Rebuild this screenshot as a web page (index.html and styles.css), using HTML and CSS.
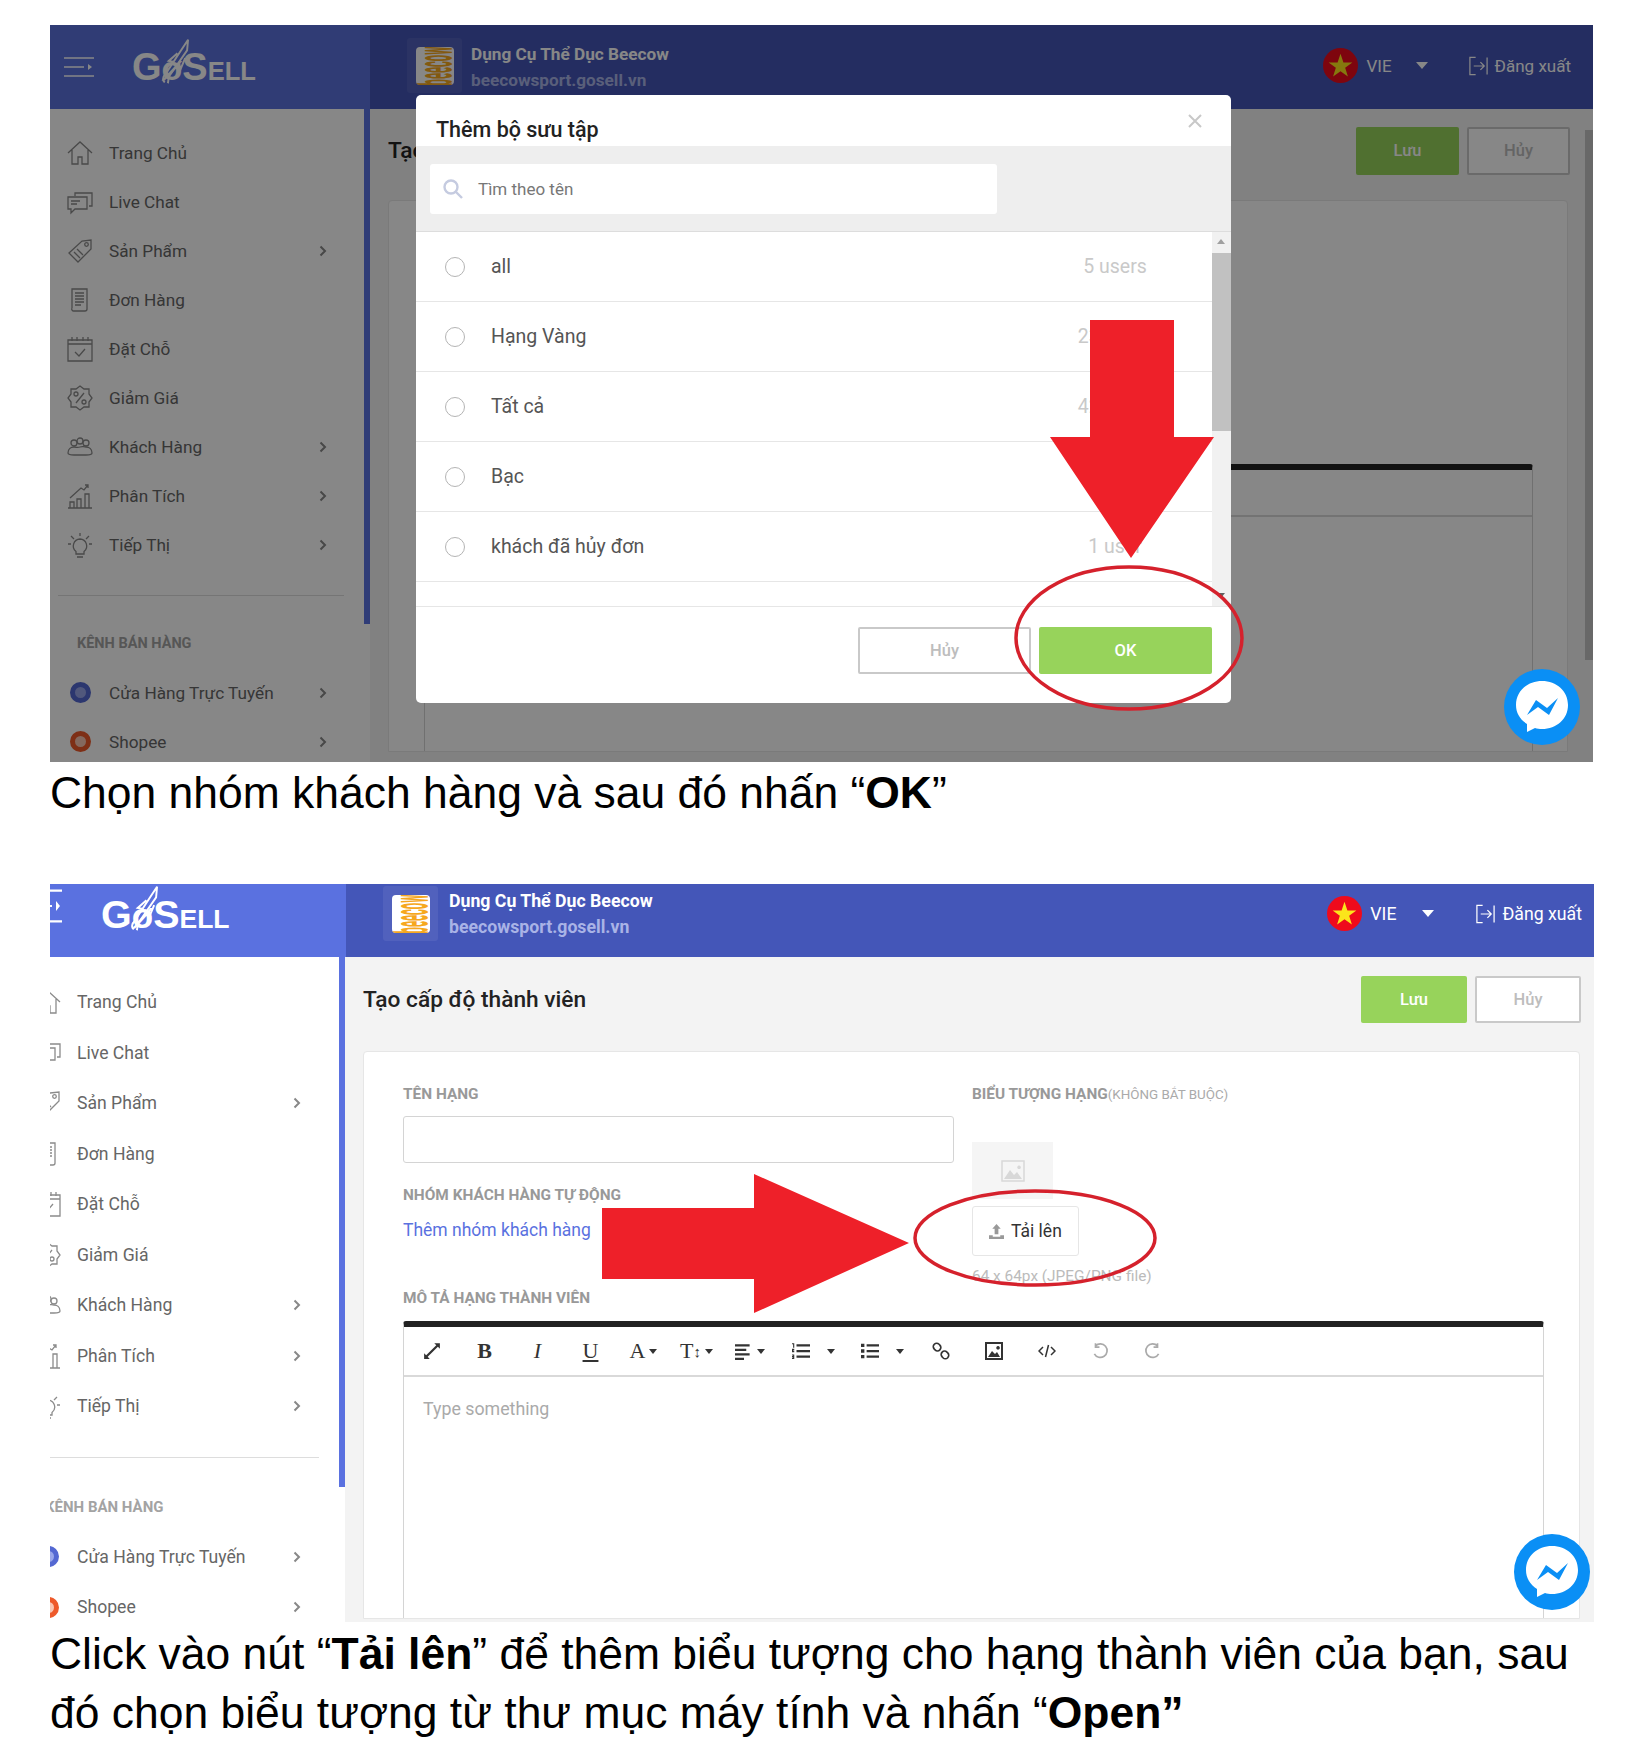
FILE: index.html
```html
<!DOCTYPE html>
<html lang="vi">
<head>
    <meta charset="UTF-8">
    <meta name="viewport" content="width=device-width, initial-scale=1.0">
    <title>Tạo cấp độ thành viên</title>
    <link rel="stylesheet" href="styles.css">
</head>
<body>
    <!-- shared sidebar icons -->
    <svg class="defs" width="0" height="0">
        <symbol id="i-home" viewBox="0 0 26 26"><path d="M1 13 13 2l12 11M5 10v14h6v-7h4v7h6V10"/></symbol>
        <symbol id="i-chat" viewBox="0 0 26 26"><path d="M8 7V4h17v13h-3M1 8h19v12H8l-4 4v-4H1zM4 12h9M4 15h6"/></symbol>
        <symbol id="i-tag" viewBox="0 0 26 26"><path d="M2 15 15 3l9-1v9L11 24zM7 14l6 6M10 11l6 6"/><circle cx="19.5" cy="6.5" r="1.8"/></symbol>
        <symbol id="i-doc" viewBox="0 0 26 26"><path d="M5 21V2h15v20a2 2 0 0 1-2 2H7a2 2 0 0 1-2-3M8 6h9M8 9h9M8 12h9M8 15h9M8 18h6"/></symbol>
        <symbol id="i-cal" viewBox="0 0 26 26"><path d="M1 4h24v21H1zM1 8h24M5 1v4M10 1v4M16 1v4M21 1v4M8 16l4 4 6-7"/></symbol>
        <symbol id="i-pct" viewBox="0 0 26 26"><path d="M13 1l4 3h5v5l3 4-3 4v5h-5l-4 3-4-3H4v-5l-3-4 3-4V4h5zM9 18l8-10"/><circle cx="9" cy="9" r="2"/><circle cx="17" cy="17" r="2"/></symbol>
        <symbol id="i-people" viewBox="0 0 26 26"><circle cx="7" cy="9" r="3"/><circle cx="13" cy="7" r="3"/><circle cx="19" cy="9" r="3"/><path d="M1 19c0-4 3-6 6-6s3 1 6 0 3 0 6 0 6 2 6 6c0 1-2 2-6 2H7c-4 0-6-1-6-2z"/></symbol>
        <symbol id="i-chart" viewBox="0 0 26 26"><path d="M1 25h24M3 25v-6h4v6M10 25v-9h4v9M18 25V11h4v14M3 15 14 5l3 2 4-5M18 2h3v3"/></symbol>
        <symbol id="i-bulb" viewBox="0 0 26 26"><path d="M13 7a7 7 0 0 0-4 12.5V22h8v-2.500A7 7 0 0 0 13 7zM10 25h6M13 1v3M4 4l3 3M22 4l-3 3M1 12h3M22 12h3"/></symbol>
        <symbol id="i-next" viewBox="0 0 10 12"><path d="M2.500 1.500 7 6l-4.500 4.500"/></symbol>
        <symbol id="i-search" viewBox="0 0 20 20"><circle cx="8" cy="8" r="6.500"/><path d="m13 13 6 6"/></symbol>
        <symbol id="i-logout" viewBox="0 0 22 22"><path d="M8 2H2v18h6M6 11h11M13 7l4 4-4 4M20 2v18"/></symbol>
        <symbol id="i-rocket" viewBox="0 0 30 50"><path d="M4 47c-3-2-2-6 1-9L22 12l6-9-1 11L9 40c-2 3-1 6-2 8M14 26l-6-1 9-8M19 28l1 6 5-12"/></symbol>
        <symbol id="i-messenger" viewBox="0 0 76 76"><circle class="m-bg" cx="38" cy="38" r="38"/><path class="m-bubble" d="M38 12c14.500 0 26 10 26 24S52.500 60 38 60c-2.500 0-5-.3-7-1l-8 4v-8c-7-4.500-11-11-11-19 0-14 11.500-24 26-24z"/><path class="m-bg" d="M23 46 32 31 43 39 54 29 45 46 34 38z"/></symbol>
        <symbol id="i-flag" viewBox="0 0 36 36"><circle class="flag-red" cx="18" cy="18" r="18"/><path class="flag-star" d="m18 6 3 8.800h9.200l-7.400 5.600 2.800 9-7.600-5.500-7.600 5.500 2.800-9-7.400-5.600H15z"/></symbol>
        <symbol id="i-burger" viewBox="0 0 30 20" preserveAspectRatio="none"><path d="M0 1h30M0 10h20M0 19h30"/><path class="solid" d="M24 7l4 3-4 3z"/></symbol>
    </svg>

    <div class="shot shot-modal">
        <header class="topbar">
            <div class="brand">
                <svg class="burger"><use href="#i-burger"/></svg>
                <span class="logo">G<span class="logo-o">ø</span>S<span class="logo-rest">ELL</span><svg class="rocket"><use href="#i-rocket"/></svg></span>
            </div>
            <div class="store">
                <div class="store-box"><div class="store-logo"><span>beecow</span></div></div>
                <div>
                    <div class="store-name">Dụng Cụ Thể Dục Beecow</div>
                    <div class="store-url">beecowsport.gosell.vn</div>
                </div>
            </div>
            <div class="top-actions">
                <svg class="flag"><use href="#i-flag"/></svg>
                <span>VIE</span>
                <span class="caret"></span>
                <svg class="logout"><use href="#i-logout"/></svg>
                <span>Đăng xuất</span>
            </div>
        </header>
        <div class="layout">
            <aside class="sidebar">
                <nav class="nav">
                    <a class="nav-item"><svg class="nav-icon"><use href="#i-home"/></svg>Trang Chủ</a>
                    <a class="nav-item"><svg class="nav-icon"><use href="#i-chat"/></svg>Live Chat</a>
                    <a class="nav-item"><svg class="nav-icon"><use href="#i-tag"/></svg>Sản Phẩm<svg class="chevron"><use href="#i-next"/></svg></a>
                    <a class="nav-item"><svg class="nav-icon"><use href="#i-doc"/></svg>Đơn Hàng</a>
                    <a class="nav-item"><svg class="nav-icon"><use href="#i-cal"/></svg>Đặt Chỗ</a>
                    <a class="nav-item"><svg class="nav-icon"><use href="#i-pct"/></svg>Giảm Giá</a>
                    <a class="nav-item"><svg class="nav-icon"><use href="#i-people"/></svg>Khách Hàng<svg class="chevron"><use href="#i-next"/></svg></a>
                    <a class="nav-item"><svg class="nav-icon"><use href="#i-chart"/></svg>Phân Tích<svg class="chevron"><use href="#i-next"/></svg></a>
                    <a class="nav-item"><svg class="nav-icon"><use href="#i-bulb"/></svg>Tiếp Thị<svg class="chevron"><use href="#i-next"/></svg></a>
                    <div class="nav-divider"></div>
                    <div class="nav-label">KÊNH BÁN HÀNG</div>
                    <a class="nav-item"><span class="channel channel-store"><span></span></span>Cửa Hàng Trực Tuyến<svg class="chevron"><use href="#i-next"/></svg></a>
                    <a class="nav-item"><span class="channel channel-shopee"><span></span></span>Shopee<svg class="chevron"><use href="#i-next"/></svg></a>
                </nav>
                <div class="side-rail"><div class="side-thumb"></div></div>
            </aside>
            <main class="main">
                <div class="main-col">
                    <div class="page-head">
                        <h1 class="page-title">Tạo cấp độ thành viên</h1>
                        <div class="page-btns">
                            <button class="btn btn-green">Lưu</button>
                            <button class="btn btn-line">Hủy</button>
                        </div>
                    </div>
                    <div class="card card-behind">
                        <div class="editor"><div class="toolbar"></div></div>
                    </div>
                </div>
                <div class="main-rail"></div>
            </main>
        </div>

        <div class="overlay"></div>
        <div class="modal">
            <div class="modal-head">
                <h2 class="modal-title">Thêm bộ sưu tập</h2>
                <svg class="modal-close" viewBox="0 0 14 14"><path d="m1 1 12 12M13 1 1 13"/></svg>
            </div>
            <div class="modal-search">
                <div class="search-box">
                    <svg class="search-icon"><use href="#i-search"/></svg>
                    <span>Tìm theo tên</span>
                </div>
            </div>
            <div class="modal-list">
                <div class="rows">
                    <div class="row"><span class="radio"></span><span class="row-name">all</span><span class="row-count">5 users</span></div>
                    <div class="row"><span class="radio"></span><span class="row-name">Hạng Vàng</span><span class="row-count">23 users</span></div>
                    <div class="row"><span class="radio"></span><span class="row-name">Tất cả</span><span class="row-count">42 users</span></div>
                    <div class="row"><span class="radio"></span><span class="row-name">Bạc</span><span class="row-count">2 users</span></div>
                    <div class="row"><span class="radio"></span><span class="row-name">khách đã hủy đơn</span><span class="row-count">1 user</span></div>
                </div>
                <div class="list-scroll">
                    <span class="scroll-up"></span>
                    <div class="scroll-thumb"></div>
                    <span class="scroll-down"></span>
                </div>
            </div>
            <div class="modal-foot">
                <button class="btn btn-line">Hủy</button>
                <button class="btn btn-green">OK</button>
            </div>
        </div>

        <svg class="messenger"><use href="#i-messenger"/></svg>
        <svg class="marks" viewBox="0 0 1543 737">
            <path class="mark-arrow" d="M1040 295h84v117h40l-83 121-81-121h40z"/>
            <ellipse class="mark-ring" cx="1079" cy="613" rx="113" ry="71"/>
        </svg>
    </div>
    <p class="caption">Chọn nhóm khách hàng và sau đó nhấn “<b>OK</b>”</p>

    <div class="shot shot-form">
        <header class="topbar">
            <div class="brand">
                <svg class="burger"><use href="#i-burger"/></svg>
                <span class="logo">G<span class="logo-o">ø</span>S<span class="logo-rest">ELL</span><svg class="rocket"><use href="#i-rocket"/></svg></span>
            </div>
            <div class="store">
                <div class="store-box"><div class="store-logo"><span>beecow</span></div></div>
                <div>
                    <div class="store-name">Dụng Cụ Thể Dục Beecow</div>
                    <div class="store-url">beecowsport.gosell.vn</div>
                </div>
            </div>
            <div class="top-actions">
                <svg class="flag"><use href="#i-flag"/></svg>
                <span>VIE</span>
                <span class="caret"></span>
                <svg class="logout"><use href="#i-logout"/></svg>
                <span>Đăng xuất</span>
            </div>
        </header>
        <div class="layout">
            <aside class="sidebar">
                <nav class="nav">
                    <a class="nav-item"><svg class="nav-icon"><use href="#i-home"/></svg>Trang Chủ</a>
                    <a class="nav-item"><svg class="nav-icon"><use href="#i-chat"/></svg>Live Chat</a>
                    <a class="nav-item"><svg class="nav-icon"><use href="#i-tag"/></svg>Sản Phẩm<svg class="chevron"><use href="#i-next"/></svg></a>
                    <a class="nav-item"><svg class="nav-icon"><use href="#i-doc"/></svg>Đơn Hàng</a>
                    <a class="nav-item"><svg class="nav-icon"><use href="#i-cal"/></svg>Đặt Chỗ</a>
                    <a class="nav-item"><svg class="nav-icon"><use href="#i-pct"/></svg>Giảm Giá</a>
                    <a class="nav-item"><svg class="nav-icon"><use href="#i-people"/></svg>Khách Hàng<svg class="chevron"><use href="#i-next"/></svg></a>
                    <a class="nav-item"><svg class="nav-icon"><use href="#i-chart"/></svg>Phân Tích<svg class="chevron"><use href="#i-next"/></svg></a>
                    <a class="nav-item"><svg class="nav-icon"><use href="#i-bulb"/></svg>Tiếp Thị<svg class="chevron"><use href="#i-next"/></svg></a>
                    <div class="nav-divider"></div>
                    <div class="nav-label">KÊNH BÁN HÀNG</div>
                    <a class="nav-item"><span class="channel channel-store"><span></span></span>Cửa Hàng Trực Tuyến<svg class="chevron"><use href="#i-next"/></svg></a>
                    <a class="nav-item"><span class="channel channel-shopee"><span></span></span>Shopee<svg class="chevron"><use href="#i-next"/></svg></a>
                </nav>
                <div class="side-rail"><div class="side-thumb"></div></div>
            </aside>
            <main class="main">
                <div class="main-col">
                    <div class="page-head">
                        <h1 class="page-title">Tạo cấp độ thành viên</h1>
                        <div class="page-btns">
                            <button class="btn btn-green">Lưu</button>
                            <button class="btn btn-line">Hủy</button>
                        </div>
                    </div>
                    <div class="card">
                        <div class="form-grid">
                            <div>
                                <label class="field-label">TÊN HẠNG</label>
                                <div class="text-input"></div>
                                <label class="field-label group-label">NHÓM KHÁCH HÀNG TỰ ĐỘNG</label>
                                <a class="add-link">Thêm nhóm khách hàng</a>
                            </div>
                            <div>
                                <label class="field-label">BIỂU TƯỢNG HẠNG<span class="optional">(KHÔNG BẮT BUỘC)</span></label>
                                <div class="thumb-box">
                                    <svg class="thumb-icon" viewBox="0 0 24 24"><path class="thumb-frame" d="M1 2h22v20H1z"/><path class="solid" d="M3 20l6-9 4 5 3-3 5 7zM18 6.500a1.800 1.800 0 1 0 .1 0z"/></svg>
                                </div>
                                <button class="upload-btn">
                                    <svg class="upload-icon" viewBox="0 0 16 16"><path class="solid" d="M8 0l4.500 5H10v6H6V5H3.500zM0 12h4v1.500h8V12h4v4H0z"/></svg>
                                    Tải lên
                                </button>
                                <div class="upload-hint">64 x 64px (JPEG/PNG file)</div>
                            </div>
                        </div>
                        <label class="field-label desc-label">MÔ TẢ HẠNG THÀNH VIÊN</label>
                        <div class="editor">
                            <div class="toolbar">
                                <span class="tool"><svg class="tool-icon" viewBox="0 0 16 16"><path class="solid" d="M1 15v-5l1.800 1.800 9-9L10 1h5v5l-1.800-1.800-9 9L6 15z"/></svg></span>
                                <span class="tool tool-serif"><b>B</b></span>
                                <span class="tool tool-serif"><i>I</i></span>
                                <span class="tool tool-serif"><u>U</u></span>
                                <span class="tool tool-serif">A<span class="tool-caret"></span></span>
                                <span class="tool tool-serif">T<small>↕</small><span class="tool-caret"></span></span>
                                <span class="tool"><svg class="tool-icon" viewBox="0 0 16 16"><path class="solid" d="M0 2h13v2H0zM0 6h10v2H0zM0 10h13v2H0zM0 14h8v2H0z"/></svg><span class="tool-caret"></span></span>
                                <span class="tool tool-ol"><svg class="tool-icon" viewBox="0 0 16 16"><path class="solid" d="M4 2h12v2H4zM4 7h12v2H4zM4 12h12v2H4zM0 1h2v4H1V2H0zM0 6h2v1.500H1V8h1v1H0zM0 11h2v4H0v-1h1v-.5H0v-1h1V12H0z"/></svg><span class="tool-caret"></span></span>
                                <span class="tool tool-ul"><svg class="tool-icon" viewBox="0 0 16 16"><path class="solid" d="M5 2h11v2H5zM5 7h11v2H5zM5 12h11v2H5zM0 1.500h3v3H0zM0 6.500h3v3H0zM0 11.500h3v3H0z"/></svg><span class="tool-caret"></span></span>
                                <span class="tool"><svg class="tool-icon tool-line" viewBox="0 0 16 16"><rect x="1" y="1.500" width="7" height="6" rx="3" transform="rotate(45 4.500 4.500)"/><rect x="8" y="8.500" width="7" height="6" rx="3" transform="rotate(45 11.500 11.500)"/></svg></span>
                                <span class="tool"><svg class="tool-icon" viewBox="0 0 18 18"><path class="tool-frame" d="M1 1h16v16H1z"/><path class="solid" d="M3 15l4-6 3 3 2-2 3 5zM13 4a1.800 1.800 0 1 0 .1 0z"/></svg></span>
                                <span class="tool"><svg class="tool-icon tool-line" viewBox="0 0 18 16"><path d="M5 4 1 8l4 4M13 4l4 4-4 4M10.500 2l-3 12"/></svg></span>
                                <span class="tool tool-off"><svg class="tool-icon tool-line" viewBox="0 0 16 16"><path d="M4 3.500a6 6 0 1 1-1 7M4 1v3.500h3.500"/></svg></span>
                                <span class="tool tool-off"><svg class="tool-icon tool-line" viewBox="0 0 16 16"><path d="M12 3.500a6 6 0 1 0 1 7M12 1v3.500H8.500"/></svg></span>
                            </div>
                            <div class="editor-body">Type something</div>
                        </div>
                    </div>
                </div>
            </main>
        </div>

        <svg class="messenger"><use href="#i-messenger"/></svg>
        <svg class="marks" viewBox="0 0 1544 738">
            <path class="mark-arrow" d="M552 324h152v-34l155 69-155 70v-34H552z"/>
            <ellipse class="mark-ring" cx="985" cy="354" rx="120" ry="47"/>
        </svg>
    </div>
    <p class="caption caption-long">Click vào nút “<b>Tải lên</b>” để thêm biểu tượng cho hạng thành viên của bạn, sau đó chọn biểu tượng từ thư mục máy tính và nhấn “<b>Open”</b></p>
</body>
</html>
```

FILE: styles.css
```css
* {
    box-sizing: border-box;
}

html, body {
    height: 1764px;
    overflow: hidden;
}

body {
    margin: 0;
    padding: 25px 0 0 50px;
    background: #fff;
    font-family: Roboto, "Liberation Sans", sans-serif;
    color: #333;
    stroke-width: 1.3;
}

.defs {
    display: block;
    height: 0;
}

symbol path, symbol circle, symbol rect {
    fill: none;
    stroke: currentColor;
}

.solid {
    fill: currentColor !important;
    stroke: none !important;
}

.flag-red {
    fill: #ef0a1c !important;
    stroke: none !important;
}

.flag-star {
    fill: #fbe51b !important;
    stroke: none !important;
}

/* one screenshot */
.shot {
    position: relative;
    display: flex;
    flex-direction: column;
    overflow: hidden;
    width: 1543px;
    background: #f3f3f3;
}

.shot-modal {
    height: 737px;
}

.shot-form {
    height: 738px;
    width: 1544px;
}

/* header */
.topbar {
    display: flex;
    align-items: center;
    flex: none;
    color: #fff;
    background: #4456b8;
}

.shot-modal .topbar {
    height: 84px;
    padding: 0 22px 3px 0;
}

.shot-form .topbar {
    height: 73px;
    padding: 0 12px 14px 0;
}

.brand {
    display: flex;
    align-items: center;
    align-self: stretch;
    background: #5a71e0;
}

.shot-modal .brand {
    width: 320px;
    margin-bottom: -3px;
    padding-left: 14px;
    background: #5b72dd;
}

.shot-form .brand {
    width: 296px;
    margin-bottom: -14px;
    padding-bottom: 12px;
    overflow: hidden;
}

.burger {
    flex: none;
    width: 30px;
    height: 20px;
    margin-right: 38px;
    color: #fff;
}

.shot-form .burger {
    width: 30px;
    height: 34px;
    margin: -17px 39px 0 -18px;
}

.logo {
    position: relative;
    font-family: "Liberation Sans", sans-serif;
    font-weight: 700;
    font-size: 38px;
    line-height: 1;
    white-space: nowrap;
}

.logo-rest {
    font-size: 25.5px;
}

.logo-o {
    font-size: 34px;
}

.shot-form .logo {
    font-size: 39.5px;
}

.shot-form .logo-rest {
    font-size: 26.5px;
}

.shot-form .logo-o {
    font-size: 35px;
}

.rocket {
    position: absolute;
    left: 29px;
    top: -12px;
    width: 29px;
    height: 50px;
    color: #fff;
    stroke-width: 2;
}

.store {
    display: flex;
    align-items: center;
    gap: 9px;
    margin-left: 37px;
    font-weight: 700;
}

.shot-form .store {
    gap: 11px;
}

.store-box {
    display: flex;
    align-items: center;
    justify-content: center;
    width: 55px;
    height: 55px;
    background: #5161bd;
    border-radius: 3px;
}

.store-logo {
    display: flex;
    align-items: center;
    justify-content: center;
    overflow: hidden;
    width: 38px;
    height: 38px;
    background: #fff;
    border-radius: 4px;
    font-size: 56px;
    font-weight: 700;
    color: #f6a81e;
}

.store-logo span {
    display: block;
    transform: rotate(-90deg) scale(.2, .9);
    white-space: nowrap;
}

.store-name, .store-url {
    font-size: 17.2px;
    line-height: 26px;
}

.shot-modal .store-name {
    padding-top: 3px;
}

.shot-form .store-name, .shot-form .store-url {
    font-size: 17.7px;
}

.store-url {
    color: #a9b3e6;
}

.top-actions {
    display: flex;
    align-items: center;
    margin-left: auto;
    font-size: 17px;
}

.shot-form .top-actions {
    font-size: 17.7px;
}

.flag {
    width: 35px;
    height: 35px;
    margin-right: 8px;
}

.caret {
    width: 0;
    height: 0;
    margin: 0 40px 0 24px;
    border: 6px solid transparent;
    border-top: 7px solid #fff;
    border-bottom: 0;
}

.shot-form .caret {
    margin: 0 41px 0 26px;
}

.logout {
    width: 21px;
    height: 22px;
    margin-right: 6px;
}

/* sidebar */
.layout {
    display: flex;
    flex: 1;
    min-height: 0;
}

.sidebar {
    display: flex;
    flex: none;
    overflow: hidden;
    background: #fff;
}

.shot-modal .sidebar {
    width: 320px;
}

.shot-form .sidebar {
    width: 295px;
}

.nav {
    flex: 1;
    padding-top: 19px;
    font-size: 17.2px;
    color: #666;
}

.shot-form .nav {
    margin-left: -32px;
    padding-top: 20px;
    font-size: 17.6px;
}

.nav-item {
    display: flex;
    align-items: center;
    height: 49px;
    padding: 0 36px 0 17px;
}

.shot-form .nav-item {
    height: 50.5px;
    padding-right: 37px;
}

.nav-icon, .channel {
    flex: none;
    width: 26px;
    height: 26px;
    margin-right: 16px;
    color: #8b8b8b;
}

.chevron {
    width: 10px;
    height: 12px;
    margin-left: auto;
    color: #888;
    stroke-width: 2;
}

.nav-divider {
    height: 1px;
    margin: 26px 20px 0 8px;
    background: #ddd;
}

.shot-form .nav-divider {
    margin-top: 25px;
}

.nav-label {
    height: 34px;
    margin: 38px 0 0 27px;
    font-size: 14.5px;
    font-weight: 700;
    line-height: 20px;
    color: #a3a3a3;
}

.shot-form .nav-label {
    height: 35px;
    margin-top: 39px;
    font-size: 15px;
}

.channel {
    display: flex;
    align-items: center;
    justify-content: center;
}

.channel span {
    display: block;
    width: 21px;
    height: 21px;
    border: 5px solid #5468d2;
    border-radius: 50%;
    background: #fff;
}

.channel-store span {
    background: #9aa7ea;
}

.channel-shopee span {
    border-color: #ee5a2b;
    background: #f9c6b3;
}

.side-rail {
    flex: none;
    width: 6px;
}

.side-thumb {
    height: 515px;
    background: #5a71e0;
}

.shot-form .side-thumb {
    height: 530px;
}

/* main area */
.main {
    display: flex;
    flex: 1;
    min-width: 0;
    padding-left: 18px;
}

.main-col {
    display: flex;
    flex: 1;
    flex-direction: column;
    min-width: 0;
}

.shot-modal .main-col {
    padding-bottom: 10px;
}

.shot-form .main {
    padding-right: 13px;
}

.shot-form .main-col {
    padding-bottom: 3px;
}

.main-rail {
    flex: none;
    width: 8px;
    height: 530px;
    margin: 21px 0 0 15px;
    background: #c4c4c4;
}

.page-head {
    display: flex;
    align-items: center;
    justify-content: space-between;
    flex: none;
    height: 47px;
    margin: 19px 0 28px;
}

.shot-modal .page-head {
    margin: 18px 0 26px;
}

.page-title {
    margin: 0;
    font-size: 22.7px;
    font-weight: 500;
    color: #222;
}

.page-btns {
    display: flex;
    gap: 8px;
}

.btn {
    width: 106px;
    height: 47px;
    border-radius: 2px;
    font-family: inherit;
    font-size: 16.5px;
    font-weight: 500;
}

.shot-modal .page-btns .btn {
    width: 103px;
    height: 48px;
}

.btn-green {
    border: none;
    background: #97d35b;
    color: #fff;
}

.btn-line {
    border: 2px solid #c9c9c9;
    background: #fff;
    color: #bdbdbd;
}

.card {
    display: flex;
    flex: 1;
    flex-direction: column;
    min-height: 0;
    margin-right: 1px;
    padding: 33px 35px 0 39px;
    border: 1px solid #e6e6e6;
    border-radius: 4px 4px 0 0;
    background: #fff;
}

.card-behind {
    margin-right: 2px;
    padding: 263px 34px 0 35px;
}

.form-grid {
    display: grid;
    grid-template-columns: 551px 1fr;
    column-gap: 18px;
    flex: none;
    height: 204px;
}

.field-label {
    display: block;
    font-size: 15.4px;
    font-weight: 700;
    line-height: 18px;
    color: #999;
}

.optional {
    font-size: 13.4px;
    font-weight: 400;
    color: #aaa;
}

.text-input {
    height: 47px;
    margin-top: 13px;
    border: 1px solid #d4d4d4;
    border-radius: 3px;
}

.group-label {
    margin-top: 23px;
}

.add-link {
    display: block;
    margin-top: 16px;
    font-size: 17.5px;
    line-height: 20px;
    color: #5a71e0;
}

.thumb-box {
    display: flex;
    align-items: center;
    justify-content: center;
    width: 81px;
    height: 57px;
    margin-top: 38px;
    background: #f5f5f5;
}

.thumb-icon {
    width: 24px;
    height: 24px;
    color: #d8d8d8;
}

.thumb-frame {
    fill: none;
    stroke: #d8d8d8;
    stroke-width: 1.5;
}

.upload-btn {
    display: flex;
    align-items: center;
    gap: 7px;
    width: 107px;
    height: 50px;
    margin-top: 7px;
    padding: 0 0 0 16px;
    border: 1px solid #e6e6e6;
    border-radius: 3px;
    background: #fff;
    font-family: inherit;
    font-size: 17.5px;
    color: #333;
}

.upload-icon {
    width: 15px;
    height: 15px;
    color: #999;
}

.upload-hint {
    margin-top: 10px;
    font-size: 15.4px;
    line-height: 20px;
    color: #bbb;
}

.desc-label {
    flex: none;
}

/* editor */
.editor {
    display: flex;
    flex: 1;
    flex-direction: column;
    min-height: 0;
    margin-top: 14px;
    border: 1px solid #d4d4d4;
    border-top: 6px solid #222;
    border-bottom: 0;
    border-radius: 3px 3px 0 0;
}

.card-behind .editor {
    margin-top: 0;
}

.toolbar {
    display: flex;
    align-items: center;
    flex: none;
    height: 50px;
    padding-left: 1px;
    border-bottom: 2px solid #d9d9d9;
}

.card-behind .toolbar {
    height: 47px;
}

.tool {
    display: flex;
    align-items: center;
    justify-content: center;
    flex: none;
    width: 53px;
    color: #333;
}

.tool-serif {
    font-family: "Liberation Serif", serif;
    font-size: 22px;
}

.tool-serif small {
    font-size: 15px;
    font-family: "Liberation Sans", sans-serif;
}

.tool-ol {
    width: 74px;
}

.tool-ul {
    width: 64px;
}

.tool-ol .tool-caret, .tool-ul .tool-caret {
    margin-left: 17px;
}

.tool-off {
    color: #aaa;
}

.tool-icon {
    width: 18px;
    height: 18px;
}

.tool-line {
    fill: none;
    stroke: currentColor;
    stroke-width: 1.5;
}

.tool-frame {
    fill: none;
    stroke: currentColor;
    stroke-width: 2;
}

.tool-caret {
    width: 0;
    height: 0;
    margin-left: 4px;
    border: 4px solid transparent;
    border-top: 5px solid #333;
    border-bottom: 0;
}

.editor-body {
    padding: 21px 19px;
    font-size: 17.8px;
    line-height: 22px;
    color: #aaa;
}

/* modal */
.overlay {
    position: absolute;
    inset: 0;
    background: rgba(0, 0, 0, .47);
}

.modal {
    position: absolute;
    left: 366px;
    top: 70px;
    display: flex;
    flex-direction: column;
    width: 815px;
    height: 608px;
    overflow: hidden;
    border-radius: 5px;
    background: #fff;
}

.modal-head {
    display: flex;
    align-items: center;
    justify-content: space-between;
    flex: none;
    height: 51px;
    padding: 17px 29px 0 20px;
}

.modal-title {
    margin: 0;
    font-size: 21.5px;
    font-weight: 500;
    color: #222;
}

.modal-close {
    width: 14px;
    height: 14px;
    margin-top: -16px;
    fill: none;
    stroke: #c8c8c8;
    stroke-width: 2;
}

.modal-search {
    flex: none;
    height: 86px;
    padding: 18px 234px 0 14px;
    border-bottom: 1px solid #ddd;
    background: #eee;
}

.search-box {
    display: flex;
    align-items: center;
    height: 50px;
    padding-left: 13px;
    border-radius: 3px;
    background: #fff;
    font-size: 17px;
    color: #777;
}

.search-icon {
    width: 20px;
    height: 20px;
    margin-right: 15px;
    color: #c5cbe0;
    stroke-width: 2.4;
}

.modal-list {
    display: flex;
    flex: none;
    height: 374px;
}

.rows {
    flex: 1;
    min-width: 0;
}

.row {
    display: flex;
    align-items: center;
    height: 70px;
    padding: 0 59px 0 29px;
    border-bottom: 1px solid #e6e6e6;
    font-size: 19.5px;
    color: #555;
}

.radio {
    flex: none;
    width: 20px;
    height: 20px;
    margin-right: 26px;
    border: 1.5px solid #b4b4b4;
    border-radius: 50%;
}

.row-count {
    width: 76px;
    margin-left: auto;
    text-align: center;
    white-space: nowrap;
    color: #c9c9c9;
}

.list-scroll {
    position: relative;
    flex: none;
    width: 19px;
    padding-top: 21px;
    background: #f1f1f1;
}

.scroll-up, .scroll-down {
    position: absolute;
    left: 5px;
    width: 0;
    height: 0;
    border: 4.5px solid transparent;
}

.scroll-up {
    top: 7px;
    border-bottom: 5px solid #a0a0a0;
    border-top: 0;
}

.scroll-down {
    bottom: 8px;
    border-top: 5px solid #606060;
    border-bottom: 0;
}

.scroll-thumb {
    height: 178px;
    background: #c1c1c1;
}

.modal-foot {
    display: flex;
    justify-content: flex-end;
    gap: 8px;
    flex: 1;
    padding: 20px 19px 0 0;
    border-top: 1px solid #e6e6e6;
}

.modal-foot .btn {
    width: 173px;
}

/* things drawn on top of the screenshots */
.messenger {
    position: absolute;
    width: 76px;
    height: 76px;
}

.shot-modal .messenger {
    left: 1454px;
    top: 644px;
}

.shot-form .messenger {
    left: 1464px;
    top: 650px;
}

.m-bg {
    fill: #0a8ff5 !important;
    stroke: none !important;
}

.m-bubble {
    fill: #fff !important;
    stroke: none !important;
}

.marks {
    position: absolute;
    inset: 0;
    width: 100%;
    height: 100%;
    pointer-events: none;
}

.mark-arrow {
    fill: #ee2029;
}

.mark-ring {
    fill: none;
    stroke: #d5212c;
    stroke-width: 3.5;
}

/* captions */
.caption {
    width: 1544px;
    height: 122px;
    margin: 0;
    padding-top: 1px;
    font-family: "Liberation Sans", Arial, sans-serif;
    font-size: 44.45px;
    line-height: 59px;
    color: #000;
}

.caption-long {
    height: auto;
    padding-top: 2px;
}
```
